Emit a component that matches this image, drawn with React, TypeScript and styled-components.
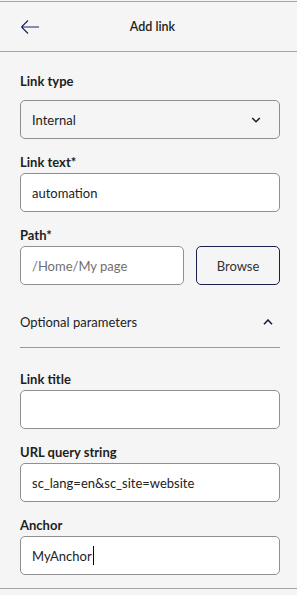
import React from "react";
import styled, { createGlobalStyle } from "styled-components";

const Global = createGlobalStyle`
  html, body { margin: 0; padding: 0; background: #f5f5f5; }
  body { font-family: Lato, "Noto Sans", sans-serif; color: #222; }
  * { box-sizing: border-box; }
`;

const Panel = styled.div`
  margin-top: 1px;
  width: 297px;
  background: #f5f5f5;
  border-top: 1px solid #a3a3a3;
  border-bottom: 1px solid #a3a3a3;
`;

const Header = styled.header`
  height: 50px;
  display: flex;
  align-items: center;
  border-bottom: 1px solid #a3a3a3;
`;

const BackButton = styled.button`
  width: 40px;
  height: 40px;
  margin-left: 10px;
  padding: 0;
  border: none;
  background: transparent;
  display: flex;
  align-items: center;
  justify-content: center;
  cursor: pointer;
`;

const Title = styled.h1`
  flex: 1;
  margin: 0;
  padding-right: 42px;
  text-align: center;
  font-size: 12.5px;
  font-weight: 600;
  color: #222;
`;

const Form = styled.div`
  padding: 19px 17px 13px 20px;
  display: flex;
  flex-direction: column;
`;

const Field = styled.div<{ $gap?: number; $top?: number }>`
  display: flex;
  flex-direction: column;
  gap: ${(p) => p.$gap ?? 1}px;
  margin-top: ${(p) => p.$top ?? 13}px;
  &:first-child { margin-top: 0; }
`;

const Label = styled.label`
  font-size: 13px;
  line-height: 20px;
  font-weight: 700;
  color: #1e1e1e;
`;

const Box = styled.div<{ $white?: boolean; $muted?: boolean }>`
  height: 39px;
  border: 1px solid #8f8f8f;
  border-radius: 5px;
  background: ${(p) => (p.$white ? "#ffffff" : "transparent")};
  display: flex;
  align-items: center;
  padding: 0 11px;
  font-size: 13px;
  color: ${(p) => (p.$muted ? "#707070" : "#222")};
  white-space: nowrap;
`;

const SelectBox = styled(Box)`
  justify-content: space-between;
  padding-right: 18px;
`;

const Row = styled.div`
  display: flex;
  gap: 12px;
`;

const Grow = styled(Box)`
  flex: 1;
`;

const BrowseButton = styled.button`
  width: 84px;
  height: 39px;
  border: 1px solid #1b1f4f;
  border-radius: 5px;
  background: transparent;
  font-family: inherit;
  font-size: 13px;
  color: #333;
  padding: 0;
`;

const Section = styled.div`
  margin-top: 27px;
  height: 36px;
  display: flex;
  align-items: flex-start;
  justify-content: space-between;
  border-bottom: 1px solid #999;
`;

const SectionTitle = styled.span`
  font-size: 13px;
  line-height: 20px;
  color: #222;
`;

const SectionToggle = styled.span`
  width: 24px;
  height: 20px;
  display: flex;
  align-items: center;
  justify-content: center;
`;

const Caret = styled.span`
  display: inline-block;
  width: 1px;
  height: 19px;
  background: #000;
  margin-left: 1px;
`;

const ArrowIcon = () => (
  <svg width="20" height="16" viewBox="0 0 20 16" fill="none">
    <path d="M1.5 8H19M1.5 8L8 1.5M1.5 8L8 14.5" stroke="#1c2260" strokeWidth="1.1" />
  </svg>
);

const Chevron = ({ up }: { up?: boolean }) => (
  <svg width="10" height="6" viewBox="0 0 10 6" fill="none">
    <path
      d={up ? "M1 5.2L5 1L9 5.2" : "M1.2 1L5 4.8L8.8 1"}
      stroke="#1a1a2e"
      strokeWidth="1.5"
    />
  </svg>
);

export default function App() {
  return (
    <>
      <Global />
      <Panel>
        <Header>
          <BackButton aria-label="Back">
            <ArrowIcon />
          </BackButton>
          <Title>Add link</Title>
        </Header>
        <Form>
          <Field $gap={9}>
            <Label>Link type</Label>
            <SelectBox>
              <span>Internal</span>
              <Chevron />
            </SelectBox>
          </Field>
          <Field>
            <Label>Link text*</Label>
            <Box $white>automation</Box>
          </Field>
          <Field>
            <Label>Path*</Label>
            <Row>
              <Grow $white $muted>/Home/My page</Grow>
              <BrowseButton>Browse</BrowseButton>
            </Row>
          </Field>
          <Section>
            <SectionTitle>Optional parameters</SectionTitle>
            <SectionToggle>
              <Chevron up />
            </SectionToggle>
          </Section>
          <Field $top={21}>
            <Label>Link title</Label>
            <Box $white />
          </Field>
          <Field>
            <Label>URL query string</Label>
            <Box $white>sc_lang=en&amp;sc_site=website</Box>
          </Field>
          <Field>
            <Label>Anchor</Label>
            <Box $white>
              MyAnchor
              <Caret />
            </Box>
          </Field>
        </Form>
      </Panel>
    </>
  );
}
